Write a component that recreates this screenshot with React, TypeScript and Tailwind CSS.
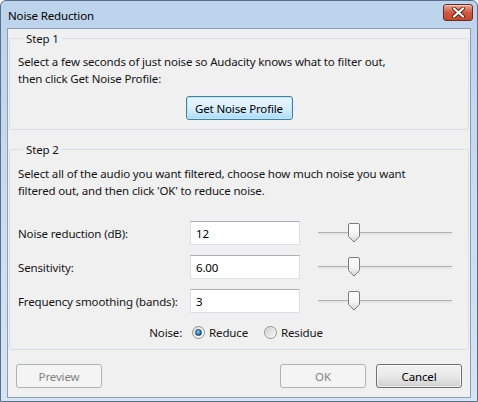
import React from 'react';

const font = { fontFamily: '"Noto Sans", "Open Sans", Arial, sans-serif' };

function CloseButton() {
  return (
    <button className="flex h-[17px] w-[30px] items-center justify-center rounded-[3px] border border-[#6b2b20] bg-gradient-to-b from-[#e9a795] via-[#cf5a42] to-[#c7462c] shadow-[inset_0_1px_0_rgba(255,255,255,0.45)]">
      <svg width="13" height="11" viewBox="0 0 13 11">
        <path d="M2 1.5 L11 9.5 M11 1.5 L2 9.5" stroke="#5a1f16" strokeWidth="4" strokeLinecap="round" />
        <path d="M2 1.5 L11 9.5 M11 1.5 L2 9.5" stroke="#ffffff" strokeWidth="2.2" strokeLinecap="round" />
      </svg>
    </button>
  );
}

function SliderThumb() {
  return (
    <svg width="12" height="20" viewBox="0 0 12 20" className="shrink-0">
      <defs>
        <linearGradient id="thumb" x1="0" y1="0" x2="0" y2="1">
          <stop offset="0" stopColor="#ffffff" />
          <stop offset="0.55" stopColor="#f4f4f4" />
          <stop offset="1" stopColor="#d6d6d6" />
        </linearGradient>
      </defs>
      <path d="M2 0.5 H10 A1.5 1.5 0 0 1 11.5 2 V13.5 L6 19 L0.5 13.5 V2 A1.5 1.5 0 0 1 2 0.5 Z" fill="url(#thumb)" stroke="#7c7c7c" />
    </svg>
  );
}

function Slider({ pos }: { pos: number }) {
  return (
    <div className="relative flex h-[24px] w-[134px] items-center">
      <div className="h-[3px] w-full border-t border-[#b0b0b0] bg-[#e6e6e6]" />
      <div className="absolute top-[2px]" style={{ left: pos }}>
        <SliderThumb />
      </div>
    </div>
  );
}

function Radio({ checked }: { checked: boolean }) {
  return (
    <span className="flex h-[13px] w-[13px] items-center justify-center rounded-full border border-[#8e8f8f] bg-gradient-to-br from-[#d9d9d9] via-[#f2f2f2] to-[#ffffff]">
      {checked ? (
        <span className="h-[7px] w-[7px] rounded-full border border-[#1b3b5c] bg-[radial-gradient(circle_at_40%_35%,#8fd0f5,#2c7fbf_55%,#15406b)]" />
      ) : (
        <span className="h-[9px] w-[9px] rounded-full bg-gradient-to-br from-[#cfcfcf] to-[#f6f6f6]" />
      )}
    </span>
  );
}

function Field({ value }: { value: string }) {
  return (
    <div className="flex h-[24px] w-[110px] items-center border border-[#dbdfe6] border-t-[#abadb3] bg-white pl-[5px] text-black">
      {value}
    </div>
  );
}

function DialogButton({ label, disabled }: { label: string; disabled?: boolean }) {
  return disabled ? (
    <button className="h-[24px] w-[86px] rounded-[3px] border border-[#adb2b5] bg-[#f4f4f4] text-[#838383]">{label}</button>
  ) : (
    <button className="h-[24px] w-[86px] rounded-[3px] border border-[#707070] bg-gradient-to-b from-[#f2f2f2] via-[#e9e9e9] to-[#d1d1d1] text-black shadow-[inset_0_0_0_1px_rgba(255,255,255,0.6)]">
      {label}
    </button>
  );
}

const rows = [
  { label: 'Noise reduction (dB):', value: '12' },
  { label: 'Sensitivity:', value: '6.00' },
  { label: 'Frequency smoothing (bands):', value: '3' },
];

export default function App() {
  return (
    <div
      className="flex h-[402px] w-[478px] flex-col rounded-t-[6px] border border-[#59708c] bg-gradient-to-b from-[#bcd3ec] via-[#cadcf0] to-[#d6e4f3] text-[11.5px] leading-[17px] tracking-[-0.15px] text-[#141414]"
      style={font}
    >
      <div className="flex h-[27px] items-center justify-between pl-[7px] pr-[4px] pt-[1px]">
        <span className="text-black">Noise Reduction</span>
        <div className="-mt-[6px]">
          <CloseButton />
        </div>
      </div>

      <div className="mx-[6px] mb-[3px] flex flex-1 flex-col border border-[#8ba0b8] bg-[#f0f0f0] px-[1px] pt-[1px]">
        <fieldset className="rounded-[3px] border border-[#d5dfe5] px-[8px] pb-[9px] pt-[6px]">
          <legend className="ml-[5px] px-[3px]">Step 1</legend>
          <p>Select a few seconds of just noise so Audacity knows what to filter out,</p>
          <p>then click Get Noise Profile:</p>
          <div className="mt-[9px] flex justify-center">
            <button className="h-[24px] w-[107px] rounded-[3px] border border-[#3c7fb1] bg-gradient-to-b from-[#eaf6fd] via-[#d9f0fc] to-[#a9dbf6] text-black shadow-[inset_0_0_0_1px_#c4e5f6]">
              Get Noise Profile
            </button>
          </div>
        </fieldset>

        <fieldset className="mt-[11px] rounded-[3px] border border-[#d5dfe5] px-[8px] pb-[8px] pt-[7px]">
          <legend className="ml-[5px] px-[3px]">Step 2</legend>
          <p>Select all of the audio you want filtered, choose how much noise you want</p>
          <p>filtered out, and then click 'OK' to reduce noise.</p>

          <div className="mt-[22px] flex flex-col gap-[10px]">
            {rows.map((row) => (
              <div key={row.label} className="flex items-center">
                <span className="w-[172px]">{row.label}</span>
                <Field value={row.value} />
                <div className="ml-[18px]">
                  <Slider pos={30} />
                </div>
              </div>
            ))}
          </div>

          <div className="mt-[11px] flex items-center justify-center pr-[6px]">
            <span className="mr-[10px]">Noise:</span>
            <Radio checked />
            <span className="ml-[4px]">Reduce</span>
            <span className="ml-[16px]">
              <Radio checked={false} />
            </span>
            <span className="ml-[4px]">Residue</span>
          </div>
        </fieldset>

        <div className="mt-[14px] flex items-center px-[7px]">
          <DialogButton label="Preview" disabled />
          <div className="flex-1" />
          <DialogButton label="OK" disabled />
          <div className="ml-[10px]">
            <DialogButton label="Cancel" />
          </div>
        </div>
      </div>
    </div>
  );
}
